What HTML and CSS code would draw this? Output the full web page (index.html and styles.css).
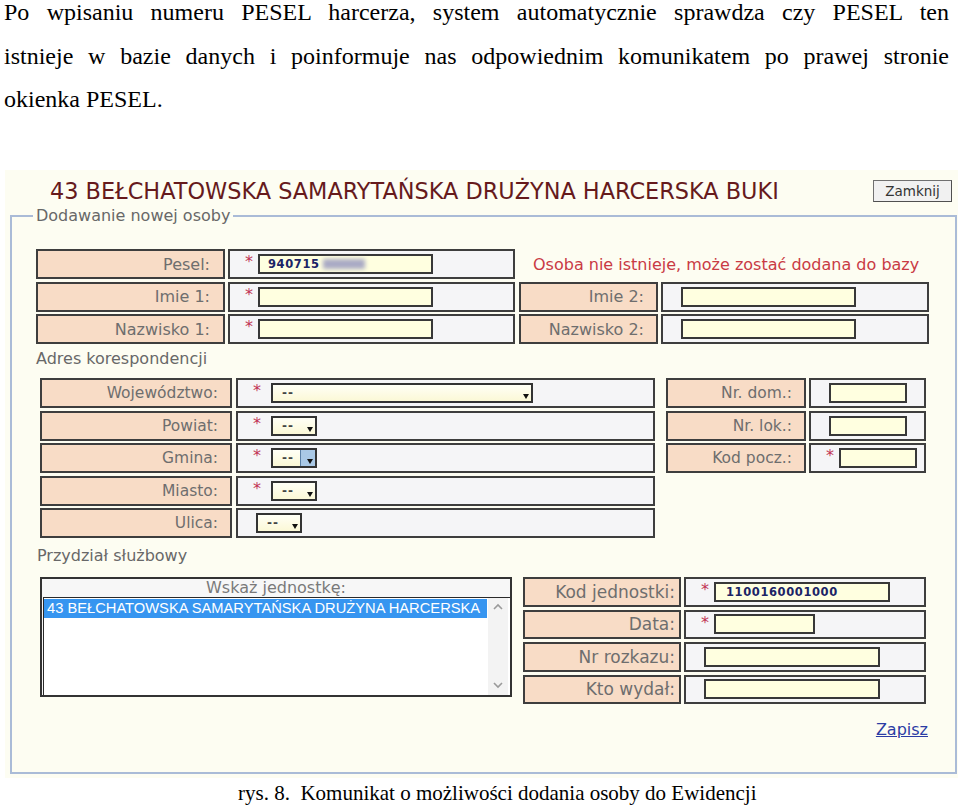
FILE: index.html
```html
<!DOCTYPE html>
<html lang="pl">
<head>
<meta charset="utf-8">
<title>Dodawanie nowej osoby</title>
<link rel="stylesheet" href="styles.css">
</head>
<body>
<p class="intro">
  <span class="line">Po wpisaniu numeru PESEL harcerza, system automatycznie sprawdza czy PESEL ten</span>
  <span class="line">istnieje w bazie danych i poinformuje nas odpowiednim komunikatem po prawej stronie</span>
  <span class="line last">okienka PESEL.</span>
</p>

<div class="shot">
  <div class="topbar">
    <h1 class="title">43 BEŁCHATOWSKA SAMARYTAŃSKA DRUŻYNA HARCERSKA BUKI</h1>
    <button class="close" type="button">Zamknij</button>
  </div>

  <fieldset class="box">
    <legend>Dodawanie nowej osoby</legend>

    <div class="rows person">
      <div class="row">
        <div class="cell lbl p-lbl1">Pesel:</div>
        <div class="cell val req p-val1"><span class="ast">*</span><span class="inp w175"><b class="num">940715</b><span class="blur"></span></span></div>
        <div class="msg">Osoba nie istnieje, może zostać dodana do bazy</div>
      </div>
      <div class="row">
        <div class="cell lbl p-lbl1">Imie 1:</div>
        <div class="cell val req p-val1"><span class="ast">*</span><span class="inp w175"></span></div>
        <div class="cell lbl p-lbl2">Imie 2:</div>
        <div class="cell val p-val2"><span class="inp w175"></span></div>
      </div>
      <div class="row">
        <div class="cell lbl p-lbl1">Nazwisko 1:</div>
        <div class="cell val req p-val1"><span class="ast">*</span><span class="inp w175"></span></div>
        <div class="cell lbl p-lbl2">Nazwisko 2:</div>
        <div class="cell val p-val2"><span class="inp w175"></span></div>
      </div>
    </div>

    <div class="sub sub-addr">Adres korespondencji</div>

    <div class="address">
      <div class="rows">
        <div class="row">
          <div class="cell lbl a-lbl1">Województwo:</div>
          <div class="cell val req a-val1"><span class="ast">*</span><span class="drop w262"><span class="dash">--</span><span class="arrow"></span></span></div>
        </div>
        <div class="row">
          <div class="cell lbl a-lbl1">Powiat:</div>
          <div class="cell val req a-val1"><span class="ast">*</span><span class="drop w46"><span class="dash">--</span><span class="arrow"></span></span></div>
        </div>
        <div class="row">
          <div class="cell lbl a-lbl1">Gmina:</div>
          <div class="cell val req a-val1"><span class="ast">*</span><span class="drop w46 hover"><span class="dash">--</span><span class="arrow"></span></span></div>
        </div>
        <div class="row">
          <div class="cell lbl a-lbl1">Miasto:</div>
          <div class="cell val req a-val1"><span class="ast">*</span><span class="drop w46"><span class="dash">--</span><span class="arrow"></span></span></div>
        </div>
        <div class="row">
          <div class="cell lbl a-lbl1">Ulica:</div>
          <div class="cell val a-val1"><span class="drop plain w46"><span class="dash">--</span><span class="arrow"></span></span></div>
        </div>
      </div>
      <div class="rows">
        <div class="row">
          <div class="cell lbl a-lbl2">Nr. dom.:</div>
          <div class="cell val a-val2"><span class="inp w78"></span></div>
        </div>
        <div class="row">
          <div class="cell lbl a-lbl2">Nr. lok.:</div>
          <div class="cell val a-val2"><span class="inp w78"></span></div>
        </div>
        <div class="row">
          <div class="cell lbl a-lbl2">Kod pocz.:</div>
          <div class="cell val req a-val2"><span class="ast">*</span><span class="inp w78"></span></div>
        </div>
      </div>
    </div>

    <div class="sub sub-unit">Przydział służbowy</div>

    <div class="unit">
      <div class="unit-box">
        <div class="unit-head">Wskaż jednostkę:</div>
        <div class="unit-list">
          <div class="unit-items">
            <div class="unit-item selected">43 BEŁCHATOWSKA SAMARYTAŃSKA DRUŻYNA HARCERSKA</div>
          </div>
          <div class="scroll">
            <svg class="sarrow" width="12" height="8" viewBox="0 0 12 8"><polyline points="2,6 6,2 10,6" fill="none" stroke="#9a9a9a" stroke-width="1.6"/></svg>
            <svg class="sarrow" width="12" height="8" viewBox="0 0 12 8"><polyline points="2,2 6,6 10,2" fill="none" stroke="#9a9a9a" stroke-width="1.6"/></svg>
          </div>
        </div>
      </div>
      <div class="rows unit-rows">
        <div class="row">
          <div class="cell lbl u-lbl">Kod jednostki:</div>
          <div class="cell val req u-val"><span class="ast">*</span><span class="inp w176"><b class="num">1100160001000</b></span></div>
        </div>
        <div class="row">
          <div class="cell lbl u-lbl">Data:</div>
          <div class="cell val req u-val"><span class="ast">*</span><span class="inp w101"></span></div>
        </div>
        <div class="row">
          <div class="cell lbl u-lbl">Nr rozkazu:</div>
          <div class="cell val u-val"><span class="inp w176"></span></div>
        </div>
        <div class="row">
          <div class="cell lbl u-lbl">Kto wydał:</div>
          <div class="cell val u-val"><span class="inp w176"></span></div>
        </div>
      </div>
    </div>

    <div class="save"><a href="#" class="save-link">Zapisz</a></div>
  </fieldset>
</div>

<p class="caption">rys. 8.&nbsp; Komunikat o możliwości dodania osoby do Ewidencji</p>
</body>
</html>
```

FILE: styles.css
```css
* { box-sizing: border-box; }

html, body {
  margin: 0;
  padding: 0;
  background: #ffffff;
}

body {
  width: 960px;
  height: 806px;
  overflow: hidden;
  font-family: "DejaVu Sans", Verdana, sans-serif;
  color: #000;
}

/* ---------- document text ---------- */
.intro {
  margin: 0;
  padding: 0 11px 0 4px;
  font-family: "Liberation Serif", "Times New Roman", serif;
  font-size: 24px;
  line-height: 24px;
}

.intro .line {
  display: block;
  margin-bottom: 19.5px;
  text-align: justify;
  text-align-last: justify;
}

.intro .line.last {
  margin-bottom: 0;
  text-align-last: left;
}

.caption {
  margin: 3px 0 0;
  padding-left: 238px;
  font-family: "Liberation Serif", "Times New Roman", serif;
  font-size: 21px;
  line-height: 24px;
  white-space: nowrap;
}

/* ---------- screenshot ---------- */
.shot {
  margin: 59px 0 0 5px;
  width: 953px;
  height: 608px;
  padding-top: 10px;
  background: #fdfdf2;
}

.topbar {
  display: flex;
  align-items: center;
  justify-content: space-between;
  height: 22px;
  padding: 0 6px 0 45px;
}

.title {
  margin: 0;
  font-size: 22.4px;
  font-weight: normal;
  line-height: 22px;
  color: #661a1c;
  white-space: nowrap;
}

.close {
  width: 79px;
  height: 22px;
  padding: 0;
  border: 1px solid #707070;
  border-right-color: #505050;
  border-bottom-color: #505050;
  background: #f1f1f1;
  font-family: "DejaVu Sans", Verdana, sans-serif;
  font-size: 13.5px;
  color: #333;
}

.box {
  margin: 4px 0 0 5px;
  width: 947px;
  padding: 0 0 32px 0;
  border: 2px solid #aabbd7;
}

.box legend {
  margin-left: 21px;
  padding: 0 3px;
  font-size: 16px;
  line-height: 20px;
  color: #686868;
}

/* ---------- table cells ---------- */
.rows {
  display: flex;
  flex-direction: column;
  gap: 2.5px;
}

.row {
  display: flex;
  align-items: center;
  height: 30px;
}

.cell {
  display: flex;
  align-items: center;
  height: 100%;
  border: 2px solid #3e3e3e;
}

.lbl {
  justify-content: flex-end;
  padding-right: 12px;
  background: #f8dcc6;
  color: #6e6e6e;
  font-size: 16px;
  white-space: nowrap;
}

.val {
  padding-left: 18px;
  background: #f5f5f7;
}

.val.req { padding-left: 15px; }

.ast {
  width: 13px;
  align-self: flex-start;
  margin-top: 3px;
  font-size: 16px;
  line-height: 16px;
  color: #c23455;
}

.inp {
  display: flex;
  align-items: center;
  height: 20px;
  padding-left: 8px;
  border: 2px solid #383838;
  background: #ffffe0;
}

.w175 { width: 175px; }
.w176 { width: 176px; }
.w101 { width: 101px; }
.w78 { width: 78px; }
.w262 { width: 262px; }
.w46 { width: 46px; }

.num {
  font-family: "DejaVu Sans", Verdana, sans-serif;
  font-size: 11.5px;
  font-weight: bold;
  letter-spacing: 0.6px;
  color: #1c2466;
}

.blur {
  width: 42px;
  height: 10px;
  margin-left: 3px;
  background: #a9aac4;
  filter: blur(2px);
}

/* person block */
.person { margin: 23px 0 0 24px; }
.p-lbl1 { width: 189px; padding-right: 13px; }
.p-val1 { width: 287px; margin-left: 3px; }
.p-lbl2 { width: 139px; margin-left: 4px; }
.p-val2 { width: 268px; margin-left: 3px; }

.msg {
  margin-left: 18px;
  font-size: 16px;
  color: #c93a44;
  white-space: nowrap;
}

.sub {
  font-size: 16px;
  line-height: 20px;
  color: #686868;
}

.sub-addr { margin: 5px 0 9px 24px; }
.sub-unit { margin: 8px 0 11px 25px; }

/* address block */
.address {
  display: flex;
  align-items: flex-start;
  gap: 11px;
  margin-left: 28px;
}

.a-lbl1 { width: 192px; font-size: 15.5px; }
.a-val1 { width: 419px; margin-left: 4px; }
.a-lbl2 { width: 140px; font-size: 15.5px; }
.a-val2 { width: 117px; margin-left: 3px; }

.drop {
  position: relative;
  display: flex;
  align-items: center;
  height: 20px;
  margin-left: 5px;
  padding-left: 9px;
  border: 2px solid #333;
  background: linear-gradient(#fffff6, #fbf8d6);
}

.drop.plain { margin-left: 0; }

.dash {
  font-size: 12px;
  font-weight: bold;
  letter-spacing: 1px;
  color: #444;
}

.arrow {
  position: absolute;
  right: 2px;
  bottom: 2px;
  width: 0;
  height: 0;
  border-left: 3.5px solid transparent;
  border-right: 3.5px solid transparent;
  border-top: 5px solid #111;
}

.drop.hover::after {
  content: "";
  position: absolute;
  top: 0;
  right: 0;
  bottom: 0;
  width: 14px;
  border-left: 1px solid #5a7fa6;
  background: #a9c8e6;
}

.drop.hover .arrow { z-index: 1; }

/* unit block */
.unit {
  display: flex;
  align-items: flex-start;
  gap: 11px;
  margin-left: 28px;
}

.unit-box {
  display: flex;
  flex-direction: column;
  width: 472px;
  height: 120px;
  border: 2px solid #333;
  background: #f7f7f7;
}

.unit-head {
  height: 18px;
  text-align: center;
  font-size: 16px;
  line-height: 18px;
  color: #7a7a7a;
}

.unit-list {
  flex: 1;
  display: flex;
  margin-left: 1px;
  border-top: 1px solid #2a2a2a;
  border-left: 1px solid #2a2a2a;
  background: #fff;
}

.unit-items {
  flex: 1;
  padding: 1px 1px 0 0;
}

.unit-item {
  height: 19px;
  padding-left: 3px;
  font-family: "Liberation Sans", Arial, sans-serif;
  font-size: 14.7px;
  line-height: 19px;
  white-space: nowrap;
}

.unit-item.selected {
  background: #3695f0;
  color: #fff;
}

.scroll {
  display: flex;
  flex-direction: column;
  justify-content: space-between;
  align-items: center;
  width: 20px;
  margin-right: 2px;
  padding: 5px 0 6px;
  background: #f3f3f3;
}

.sarrow { display: block; }

.unit-rows .row { height: 29.5px; }
.unit-rows { gap: 3px; }

.u-lbl { width: 158px; padding-right: 4px; font-size: 17px; }
.u-val { width: 242px; margin-left: 3px; }

.u-val .inp { padding-left: 10px; }

.save {
  margin-top: 16px;
  padding-right: 27px;
  text-align: right;
  line-height: 20px;
}

.save-link {
  font-size: 16px;
  color: #2b3ca4;
  text-decoration: underline;
}
```
